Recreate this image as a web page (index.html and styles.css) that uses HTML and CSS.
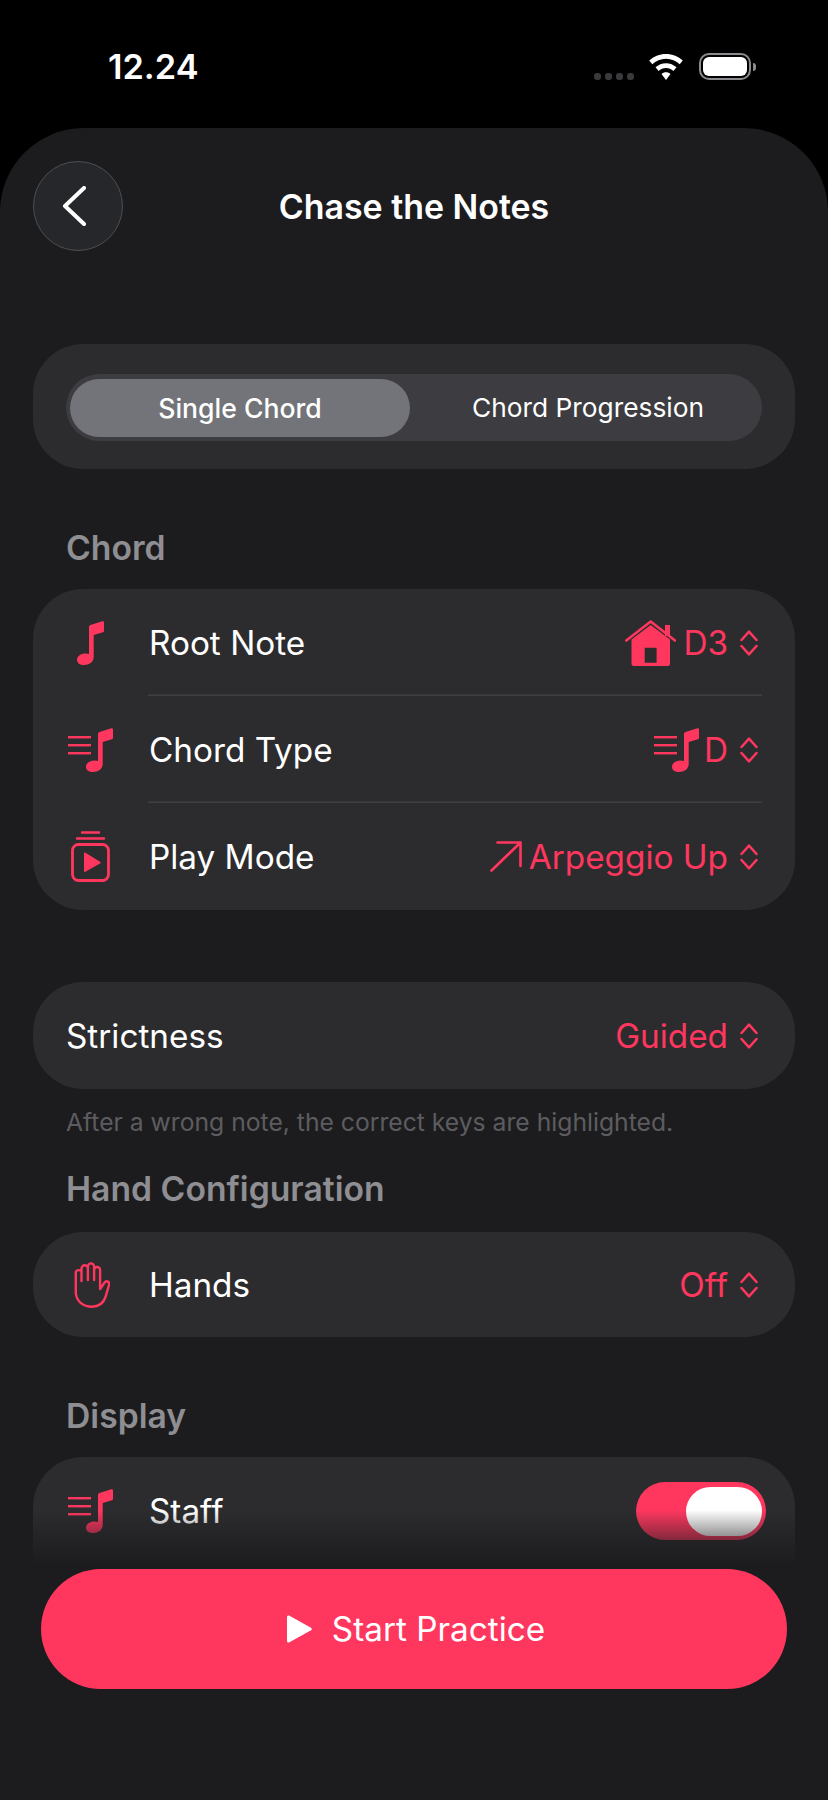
FILE: index.html
```html
<!DOCTYPE html>
<html lang="en">
<head>
    <meta charset="UTF-8">
    <title>Chase the Notes</title>
    <link rel="stylesheet" href="styles.css">
</head>
<body>
<svg class="defs" width="0" height="0">
    <symbol id="note" viewBox="0 0 27 44">
        <path d="M12 6Q12 4.5 13.5 4L25.3.3Q27 0 27 1.5V10Q27 11 26 11.3L16.7 14V36C16.7 41 12 44 7 44 3 44 0 42 0 39 0 35 4 32.5 8.5 32.5 10 32.5 11 32.7 12 33Z"/>
    </symbol>
    <symbol id="note-lines" viewBox="0 0 45 44">
        <rect x="0" y="8" width="23" height="2.4"/>
        <rect x="0" y="16" width="23" height="2.4"/>
        <rect x="0" y="24" width="23" height="2.4"/>
        <path transform="translate(18 0)" d="M12 6Q12 4.5 13.5 4L25.3.3Q27 0 27 1.5V10Q27 11 26 11.3L16.7 14V36C16.7 41 12 44 7 44 3 44 0 42 0 39 0 35 4 32.5 8.5 32.5 10 32.5 11 32.7 12 33Z"/>
    </symbol>
    <symbol id="updown" viewBox="0 0 18 26">
        <path d="M1.5 10L9 1.7l7.5 8.3M1.5 16L9 24.3l7.5-8.3" fill="none" stroke="#ff375f" stroke-width="2.5" stroke-linecap="round" stroke-linejoin="round"/>
    </symbol>
</svg>

<div class="status">
    <span class="time">12.24</span>
    <div class="status-icons">
        <div class="signal"><i></i><i></i><i></i><i></i></div>
        <svg class="wifi" viewBox="0 0 34 26" width="34" height="26">
            <path d="M17 0C23.500 0 29.400 2.500 33.800 6.600L30.700 10.200C27.100 6.900 22.300 4.800 17 4.800S6.900 6.900 3.300 10.200L.2 6.600C4.600 2.500 10.500 0 17 0Z"/>
            <path d="M17 9.200C21 9.200 24.700 10.800 27.500 13.300L24.400 16.900C22.400 15.100 19.800 14 17 14S11.600 15.100 9.600 16.900L6.500 13.300C9.300 10.800 13 9.200 17 9.200Z"/>
            <path d="M17 18.300C18.800 18.300 20.400 18.900 21.500 20L17 26 12.500 20C13.600 18.900 15.200 18.300 17 18.300Z"/>
        </svg>
        <div class="battery"><div class="battery-fill"></div></div>
    </div>
</div>

<div class="sheet">
    <div class="topbar">
        <button class="back">
            <svg viewBox="0 0 24 40" width="24" height="40"><path d="M22 2L3 20l19 18" fill="none" stroke="#fff" stroke-width="4" stroke-linecap="round" stroke-linejoin="round"/></svg>
        </button>
        <h1 class="title">Chase the Notes</h1>
    </div>

    <div class="card seg-card">
        <div class="seg">
            <div class="seg-item active">Single Chord</div>
            <div class="seg-item">Chord Progression</div>
        </div>
    </div>

    <h2 class="label label-chord">Chord</h2>
    <div class="card">
        <div class="row">
            <div class="row-icon"><svg class="pink" width="27" height="44"><use href="#note"/></svg></div>
            <div class="row-body">
                <span class="row-name">Root Note</span>
                <span class="row-value">
                    <svg class="pink tight" viewBox="0 0 51 46" width="51" height="46">
                        <path d="M40 5h5v11h-5z"/>
                        <path d="M25.700 5L45 19.500V43.500Q45 46 42.500 46H9Q6.500 46 6.500 43.500V19.500ZM19.700 27.700V42.700H31.600V27.700Z" fill-rule="evenodd"/>
                        <path d="M1.300 20.500L25.700 1.500 50 20.500" fill="none" stroke="#ff375f" stroke-width="2.600" stroke-linecap="round" stroke-linejoin="round"/>
                    </svg>
                    <span class="value-text">D3</span>
                    <svg class="updown" width="18" height="26"><use href="#updown"/></svg>
                </span>
            </div>
        </div>
        <div class="row">
            <div class="row-icon"><svg class="pink" width="45" height="44"><use href="#note-lines"/></svg></div>
            <div class="row-body">
                <span class="row-name">Chord Type</span>
                <span class="row-value">
                    <svg class="pink tighter" width="45" height="44"><use href="#note-lines"/></svg>
                    <span class="value-text">D</span>
                    <svg class="updown" width="18" height="26"><use href="#updown"/></svg>
                </span>
            </div>
        </div>
        <div class="row">
            <div class="row-icon">
                <svg viewBox="0 0 39 51" width="39" height="51" fill="none" stroke="#ff375f">
                    <path d="M11 1.500h17M6 7.500h27" stroke-width="2.400" stroke-linecap="round"/>
                    <rect x="1.500" y="13.500" width="36" height="36" rx="6" stroke-width="2.800"/>
                    <path d="M13 22.500v17.500a1 1 0 0 0 1.500.8l14.500-8.200a1 1 0 0 0 0-1.800l-14.500-9a1 1 0 0 0-1.500.7z" fill="#ff375f" stroke="none"/>
                </svg>
            </div>
            <div class="row-body">
                <span class="row-name">Play Mode</span>
                <span class="row-value">
                    <svg class="tight" viewBox="0 0 32 31" width="32" height="31"><path d="M1.500 29.500L30.500 1.500M7.500 1.500H30.500V25" fill="none" stroke="#ff375f" stroke-width="2.600" stroke-linecap="round" stroke-linejoin="round"/></svg>
                    <span class="value-text">Arpeggio Up</span>
                    <svg class="updown" width="18" height="26"><use href="#updown"/></svg>
                </span>
            </div>
        </div>
    </div>

    <div class="card card-strict">
        <div class="row row-plain">
            <div class="row-body">
                <span class="row-name">Strictness</span>
                <span class="row-value">
                    <span class="value-text">Guided</span>
                    <svg class="updown" width="18" height="26"><use href="#updown"/></svg>
                </span>
            </div>
        </div>
    </div>
    <p class="hint">After a wrong note, the correct keys are highlighted.</p>

    <h2 class="label label-hand">Hand Configuration</h2>
    <div class="card">
        <div class="row row-short">
            <div class="row-icon">
                <svg class="hand" viewBox="0 0 36 46" width="36" height="46"><path d="M7.500 19V6.500a3.200 3.200 0 0 1 6.400 0V18M13.900 18V4.500a3.100 3.100 0 0 1 6.200 0V18M20.100 18V8a3 3 0 0 1 6 0V27l4.500-6.500c1.500-2.300 5.500-.8 4.500 2.200L31.500 35C29.500 41 25 44.700 18 44.700 8.500 44.700 2.500 39 1.800 31V10.500a2.900 2.900 0 0 1 5.700 0V19" fill="none" stroke="#ff375f" stroke-width="2.400" stroke-linecap="round" stroke-linejoin="round"/></svg>
            </div>
            <div class="row-body">
                <span class="row-name">Hands</span>
                <span class="row-value">
                    <span class="value-text">Off</span>
                    <svg class="updown" width="18" height="26"><use href="#updown"/></svg>
                </span>
            </div>
        </div>
    </div>

    <h2 class="label label-display">Display</h2>
    <div class="card card-display">
        <div class="row">
            <div class="row-icon"><svg class="pink" width="45" height="44"><use href="#note-lines"/></svg></div>
            <div class="row-body">
                <span class="row-name">Staff</span>
                <div class="toggle"><div class="knob"></div></div>
            </div>
        </div>
    </div>
</div>

<div class="bottom">
    <button class="start">
        <svg viewBox="0 0 25 28" width="25" height="28"><path d="M0 2Q0 0 2 .6L24 12.700Q25.500 14 24 15.300L2 27.400Q0 28 0 26Z" fill="#fff"/></svg>
        <span>Start Practice</span>
    </button>
</div>
</body>
</html>
```

FILE: styles.css
```css
*{
    margin: 0;
    padding: 0;
    box-sizing: border-box;
}
html,body{
    width: 828px;
    height: 1800px;
    overflow: hidden;
    background: #000;
}
body{
    position: relative;
    font-family: Inter, "Liberation Sans", sans-serif;
    color: #fff;
}
.defs{
    position: absolute;
}
.pink{
    fill: #ff375f;
}

/* status bar */
.status{
    height: 128px;
    padding: 47px 77px 0 108px;
    display: flex;
    justify-content: space-between;
    align-items: flex-start;
}
.time{
    font-size: 34.3px;
    font-weight: 600;
    line-height: 40px;
}
.status-icons{
    display: flex;
    align-items: flex-start;
    padding-top: 7px;
}
.signal{
    display: flex;
    gap: 4px;
    margin: 19px 15px 0 0;
}
.signal i{
    width: 7px;
    height: 7px;
    border-radius: 3px;
    background: #3a3a3c;
}
.wifi{
    fill: #fff;
    margin-right: 16px;
}
.battery{
    position: relative;
    width: 52px;
    height: 27px;
    margin-top: -1px;
    border: 2px solid #8a8a8e;
    border-radius: 10px;
    padding: 2px;
}
.battery:after{
    content: "";
    position: absolute;
    right: -7px;
    top: 8px;
    width: 3px;
    height: 8px;
    border-radius: 0 3px 3px 0;
    background: #8a8a8e;
}
.battery-fill{
    height: 100%;
    background: #fff;
    border-radius: 6px;
}

/* sheet */
.sheet{
    height: 1672px;
    background: #1c1c1e;
    border-radius: 84px 84px 0 0;
    padding: 0 33px;
    overflow: hidden;
}
.topbar{
    position: relative;
    height: 216px;
    padding-top: 33px;
}
.back{
    width: 90px;
    height: 90px;
    border-radius: 50%;
    background: #26272a;
    border: 1.5px solid #4f4f52;
    display: flex;
    align-items: center;
    justify-content: center;
    padding-right: 9px;
}
.title{
    position: absolute;
    left: 0;
    right: 0;
    top: 59px;
    text-align: center;
    font-size: 33.9px;
    font-weight: 600;
    line-height: 40px;
}
.card{
    background: #2c2c2e;
    border-radius: 50px;
}
.seg-card{
    height: 125px;
    padding: 30px 33px 28px;
}
.seg{
    height: 67px;
    background: #3c3c41;
    border-radius: 34px;
    padding: 5px 4px;
    display: flex;
}
.seg-item{
    flex: 1;
    height: 58px;
    line-height: 58px;
    padding-left: 8px;
    text-align: center;
    font-size: 26.3px;
}
.seg-item.active{
    flex: none;
    width: 340px;
    padding-left: 0;
    background: #737479;
    border-radius: 29px;
    font-size: 26.6px;
    font-weight: 500;
}
.label{
    font-size: 33.7px;
    font-weight: 600;
    line-height: 40px;
    color: #8e8e93;
    padding-left: 33px;
}
.label-chord{
    margin: 59px 0 21px;
}
.label-hand{
    margin: 31px 0 23px;
}
.label-display{
    margin: 59px 0 21px;
}
.row{
    display: flex;
    height: 107px;
}
.row-short{
    height: 105px;
}
.row-icon{
    width: 115px;
    flex: none;
    display: flex;
    align-items: center;
    justify-content: center;
}
.hand{
    margin-left: 3px;
}
.row-body{
    flex: 1;
    display: flex;
    align-items: center;
    justify-content: space-between;
    margin-right: 33px;
    box-shadow: inset 0 -1.5px 0 #404043;
}
.row:last-child .row-body{
    box-shadow: none;
}
.row-plain .row-body{
    margin-left: 32px;
}
.row-name{
    margin: 1px 0 0 1px;
    font-size: 33.3px;
    line-height: 40px;
}
.row-value{
    display: flex;
    align-items: center;
    gap: 8px;
    font-size: 33.3px;
    line-height: 40px;
    color: #ff375f;
}
.value-text{
    margin-top: 1px;
}
.tight{
    margin-right: -1px;
}
.tighter{
    margin-right: -3px;
}
.updown{
    margin: 0 4px 0 4px;
}
.card-strict{
    margin-top: 72px;
}
.hint{
    padding: 17px 0 0 33px;
    font-size: 24.7px;
    line-height: 32px;
    color: #5c5c60;
}
/* list goes on under the button, so no round corners show in the fade */
.card-display{
    padding-bottom: 60px;
}
.toggle{
    width: 130px;
    height: 58px;
    margin-right: -4px;
    border-radius: 29px;
    background: #ff375f;
    padding: 5px 4px 5px 50px;
}
.knob{
    height: 49px;
    background: #fff;
    border-radius: 25px;
}

/* fades over the list, holds the button */
.bottom{
    position: absolute;
    left: 0;
    right: 0;
    bottom: 0;
    height: 290px;
    padding: 59px 41px 0;
    background: linear-gradient(to bottom, rgba(28,28,30,0) 0, #1c1c1e 55px);
}
.start{
    width: 100%;
    height: 120px;
    border: 0;
    border-radius: 60px;
    background: #ff375f;
    color: #fff;
    font-family: inherit;
    font-size: 33.3px;
    padding-left: 4px;
    display: flex;
    align-items: center;
    justify-content: center;
    gap: 20px;
}
```
